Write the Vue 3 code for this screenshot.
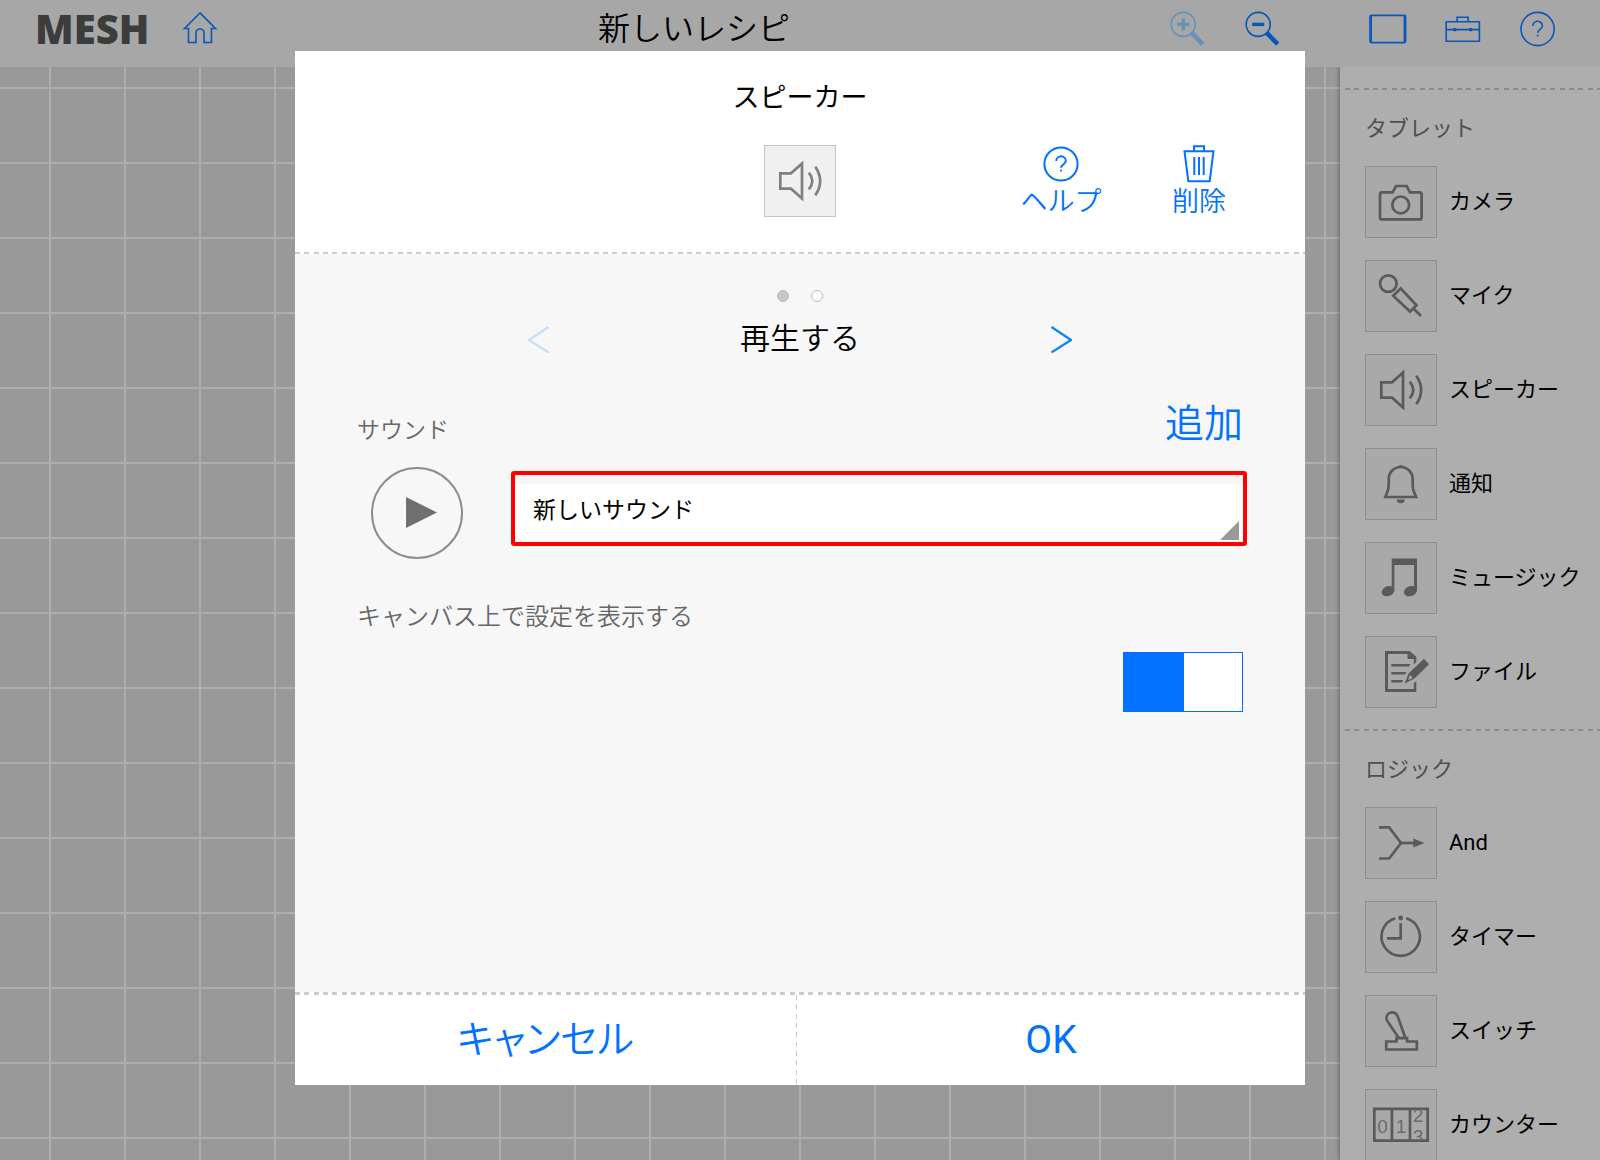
<template>
  <div class="app">
    <header class="topbar">
      <h1 class="logo">MESH</h1>
      <button class="tool home" aria-label="ホーム">
        <svg class="tool-icon" viewBox="0 0 40 40">
          <path d="M20 4 4.500 19.500h4v14H16V24a4 4 0 0 1 8 0v9.500h7.500v-14h4z" />
        </svg>
      </button>
      <div class="recipe-name">新しいレシピ</div>
      <div class="tools">
        <button class="tool faded" aria-label="拡大">
          <svg class="tool-icon" viewBox="0 0 40 40">
            <circle cx="15.2" cy="15.4" r="12" />
            <path class="thick" d="M9.2 15.4h12M15.2 9.4v12" />
            <path class="handle" d="m23.5 23.7 11.2 11.4" />
          </svg>
        </button>
        <button class="tool zoom-out" aria-label="縮小">
          <svg class="tool-icon" viewBox="0 0 40 40">
            <circle cx="15.2" cy="15.4" r="12" />
            <path class="thick" d="M9.2 15.4h12" />
            <path class="handle" d="m23.5 23.7 11.2 11.4" />
          </svg>
        </button>
        <button class="tool" aria-label="タブレット">
          <svg class="tool-icon" viewBox="0 0 40 40">
            <rect x="2" y="6.4" width="35.6" height="27.2" rx="1.5" />
            <path d="M3.2 7v26M36.4 7v26" />
          </svg>
        </button>
        <button class="tool" aria-label="ツール">
          <svg class="tool-icon" viewBox="0 0 40 40">
            <path d="M3.2 12.7h33.2v19.6H3.2zM3.2 20.6h33.2M14.1 12.5V8.2h11v4.3" />
            <path class="thick" d="M10.3 20.6h3M26.1 20.6h3" />
          </svg>
        </button>
        <button class="tool" aria-label="ヘルプ">
          <svg class="tool-icon" viewBox="0 0 40 40">
            <circle cx="19.6" cy="20" r="16.6" />
            <path d="M14.900 17a4.700 4.700 0 0 1 9.500 0c0 3.200-4.700 3.400-4.700 6.800M19.700 25.800v1.800" />
          </svg>
        </button>
      </div>
    </header>

    <div class="workspace">
      <main class="canvas"></main>

      <aside class="sidebar">
        <section v-for="group in groups" :key="group.title">
          <div class="dashes"></div>
          <h2 class="group-title">{{ group.title }}</h2>
          <ul class="tag-list">
            <li v-for="tag in group.tags" :key="tag.name">
              <button class="tag">
                <span class="tag-box">
                  <svg viewBox="0 0 70 70">
                    <path
                      v-for="(d, i) in tag.lines"
                      :key="i"
                      class="line"
                      :d="d"
                    />
                    <path
                      v-for="(d, i) in tag.fills"
                      :key="'f' + i"
                      class="fill"
                      :d="d"
                    />
                    <!-- The counter shows its last wheel halfway between two digits -->
                    <template v-if="tag.digits">
                      <clipPath id="wheel">
                        <rect x="8" y="20.5" width="54" height="28.5" />
                      </clipPath>
                      <g clip-path="url(#wheel)">
                        <text
                          v-for="digit in tag.digits"
                          :key="digit.text"
                          :x="digit.x"
                          :y="digit.y"
                        >
                          {{ digit.text }}
                        </text>
                      </g>
                    </template>
                  </svg>
                </span>
                {{ tag.name }}
              </button>
            </li>
          </ul>
        </section>
      </aside>
    </div>

    <div class="overlay">
      <div class="dialog" role="dialog" aria-labelledby="dialog-title">
        <div class="dialog-head">
          <h2 id="dialog-title" class="dialog-title">スピーカー</h2>
          <div class="dialog-tools">
            <span class="tag-box light">
              <svg viewBox="0 0 70 70">
                <path v-for="(d, i) in speaker" :key="i" class="line" :d="d" />
              </svg>
            </span>
            <button class="action help">
              <svg class="tool-icon" viewBox="0 0 40 40">
                <circle cx="20" cy="20" r="16.6" />
                <path d="M15.3 17a4.7 4.7 0 0 1 9.5 0c0 3.2-4.7 3.4-4.7 6.8M20.1 25.8v1.8" />
              </svg>
              ヘルプ
            </button>
            <button class="action delete">
              <svg class="tool-icon" viewBox="0 0 40 40">
                <path d="M5.5 7.2h29l-3.8 30H9.3zM15 7V2.2h10V7" />
                <path d="M15.3 13v18M20 13v18M24.7 13v18" />
              </svg>
              削除
            </button>
          </div>
        </div>
        <div class="dashes"></div>

        <div class="dialog-body">
          <div class="dots">
            <span
              v-for="n in pages.length"
              :key="n"
              class="dot"
              :class="{ active: page === n - 1 }"
            ></span>
          </div>
          <div class="pager">
            <button
              class="arrow"
              aria-label="前へ"
              :disabled="page === 0"
              @click="page--"
            >
              <svg viewBox="0 0 22 28"><path d="M20.500 2 1 15l19.500 12.500" /></svg>
            </button>
            <span class="page-name">{{ pages[page] }}</span>
            <button
              class="arrow"
              aria-label="次へ"
              :disabled="page === pages.length - 1"
              @click="page++"
            >
              <svg viewBox="0 0 22 28"><path d="M1.500 2 21 15 1.500 27.500" /></svg>
            </button>
          </div>

          <div class="sound-head">
            <label class="label" for="sound">サウンド</label>
            <button class="add">追加</button>
          </div>
          <div class="sound-row">
            <button class="play" aria-label="再生">
              <svg viewBox="0 0 92 92">
                <circle cx="46" cy="46" r="45" />
                <path d="M35 30v31l31-15.500z" />
              </svg>
            </button>
            <div class="select-wrap">
              <select id="sound" v-model="sound">
                <option>新しいサウンド</option>
              </select>
            </div>
          </div>

          <div class="show-setting">
            <label class="label" for="show">キャンバス上で設定を表示する</label>
            <input id="show" v-model="showOnCanvas" class="switch" type="checkbox" />
          </div>
        </div>

        <div class="dashes bold"></div>
        <div class="dialog-foot">
          <button class="cancel">キャンセル</button>
          <div class="divider"></div>
          <button class="ok">OK</button>
        </div>
      </div>
    </div>
  </div>
</template>

<script setup>
import { ref } from "vue";

const pages = ["再生する", "停止する"];
const page = ref(0);
const sound = ref("新しいサウンド");
const showOnCanvas = ref(true);

// Used both in the sidebar and at the top of the dialog.
const speaker = [
  "M15.300 27.300H26L37 17.600V52.400L26 42.700H15.300z",
  "M43.800 26.700Q50.800 35 43.800 43.300",
  "M50.300 20.700Q60 35 50.300 49.300",
];

// Icons are drawn on a 70 x 70 grid: lines are stroked, fills are solid.
const groups = [
  {
    title: "タブレット",
    tags: [
      {
        name: "カメラ",
        lines: [
          "M16 25.400H26.600L30 19H40.600L44 25.400H53.600a2 2 0 0 1 2 2V50.400a2 2 0 0 1-2 2H16a2 2 0 0 1-2-2V27.400a2 2 0 0 1 2-2z",
          "M26.300 37.900a8.400 8.400 0 1 0 16.800 0a8.400 8.400 0 1 0-16.800 0z",
        ],
      },
      {
        name: "マイク",
        lines: [
          "M14 22.600a8.300 8.300 0 1 0 16.600 0a8.300 8.300 0 1 0-16.600 0z",
          "M34.700 27.500 50.500 44.200 44 50.600 27.200 34.800z",
          "M47.500 47.500 55 55",
        ],
      },
      { name: "スピーカー", lines: speaker },
      {
        name: "通知",
        lines: [
          "M22.700 36V30a12 12 0 0 1 24 0V37c0 5 1.800 6.500 3.400 11H19.300c1.600-4.500 3.400-6 3.400-12z",
        ],
        fills: [
          "M31.500 18.500a3.300 2.800 0 0 1 6.500 0z",
          "M30.600 50.500h8.200a4.100 3.800 0 0 1-8.200 0z",
        ],
      },
      {
        name: "ミュージック",
        fills: [
          "M25.700 15.600H51V48H48V22H28.400V48H25.700z",
          "M15.800 49.400c0-4 4-6.500 7.500-6.500 3 0 5 1.500 5 4.200 0 3.500-3.500 6.200-7.200 6.200-3 0-5.300-1.500-5.300-3.900z",
          "M38 49.400c0-4 4-6.500 7.500-6.500 3 0 5.400 1.500 5.400 4.200 0 3.500-3.600 6.200-7.300 6.200-3 0-5.600-1.500-5.600-3.900z",
        ],
      },
      {
        name: "ファイル",
        fills: [
          "M19 14H43.500L50.300 19.800V25L47.800 27.500V22H41.500V17H22V52H47.800V46.500L50.300 44V55H19z",
          "M25.300 27H44.500L43 29.500H25.300zM25.300 35H40.500L39 37.500H25.300zM25.300 43H37L36 45.500H25.300z",
          "M58 21.800 63 27.200 48.500 41.500 38.700 46.500 42.500 36.500zM44 38 42 43.300 46.800 40.800z",
        ],
      },
    ],
  },
  {
    title: "ロジック",
    tags: [
      {
        name: "And",
        lines: [
          "M13 19.400H23.200L35 35 23.200 50.500H13",
          "M35 35H48",
        ],
        fills: ["M47.300 30.500 58.500 35 47.300 39.500z"],
      },
      {
        name: "タイマー",
        lines: [
          "M40.200 16.200A19.200 19.200 0 1 1 29.200 16.200",
          "M34.700 21.300V36.300H21",
        ],
        fills: ["M32.300 16a2.400 2.400 0 1 0 4.800 0a2.400 2.400 0 1 0-4.800 0z"],
      },
      {
        name: "スイッチ",
        lines: [
          "M32.500 41.500 21 24.500A5.700 5.700 0 1 1 31.400 19.600L39.200 41.500",
          "M20.200 45.500H30.500V42.200H41V45.500H50.800V53.500H20.200z",
        ],
      },
      {
        name: "カウンター",
        lines: ["M8.300 18.800H61.700V50.600H8.300zM25.900 19V50M44 19V50"],
        digits: [
          { text: "0", x: 16.5, y: 43 },
          { text: "1", x: 35, y: 43 },
          { text: "2", x: 52, y: 31.5 },
          { text: "3", x: 52, y: 52.5 },
        ],
      },
    ],
  },
];
</script>

<style>
body {
  margin: 0;
}
</style>

<style scoped>
.app {
  position: relative;
  display: flex;
  flex-direction: column;
  height: 100vh;
  overflow: hidden;
  background: #999;
  color: #000;
  font-family: Roboto, "Noto Sans CJK JP", sans-serif;
  font-size: 23px;
  font-weight: 400;
}

button {
  padding: 0;
  border: 0;
  background: none;
  color: inherit;
  font: inherit;
  cursor: pointer;
}

h1,
h2,
ul {
  margin: 0;
  padding: 0;
  font-weight: inherit;
  list-style: none;
}

svg {
  display: block;
}

.topbar {
  display: flex;
  align-items: center;
  height: 58px;
  padding: 0 25px 9px 35px;
  background: #a7a7a7;
}

.logo {
  flex: 0 0 127px;
  color: #3c3c3c;
  font-family: "Open Sans", sans-serif;
  font-size: 40px;
  font-weight: 800;
  line-height: 56px;
}

.recipe-name {
  flex: 1;
  font-size: 32px;
  font-weight: 350;
  line-height: 56px;
  text-align: center;
}

.tools {
  display: flex;
}

.tool {
  display: flex;
  justify-content: center;
  width: 75px;
  color: #0a55b8;
}

.home {
  width: 76px;
}

.faded {
  color: #6890b8;
}

.zoom-out {
  margin-right: 50px;
  color: #0558b8;
}

.tool-icon {
  width: 40px;
  height: 40px;
  fill: none;
  stroke: currentColor;
  stroke-width: 1.6;
}

.thick {
  stroke-width: 3.4;
}

.handle {
  stroke-width: 4.6;
}

.workspace {
  display: flex;
  flex: 1;
  min-height: 0;
}

.canvas {
  flex: 1;
  background-image:
    linear-gradient(90deg, #aeaeae 2px, transparent 2px),
    linear-gradient(#aeaeae 2px, transparent 2px);
  background-position: 49px 20px;
  background-size: 75px 75px;
}

.sidebar {
  flex: 0 0 255px;
  padding: 21px 0 0 5px;
  background: #aeaeae;
  box-shadow: -1px 0 4px rgba(0, 0, 0, 0.35);
  clip-path: inset(0 0 0 -10px);
}

.dashes {
  height: 2px;
  background: repeating-linear-gradient(
    90deg,
    #ccc 0 5px,
    transparent 5px 9px,
    #ccc 9px 14px,
    transparent 14px 19px,
    #ccc 19px 24px,
    transparent 24px 28px
  );
}

.sidebar .dashes {
  filter: brightness(0.68);
}

.group-title {
  height: 76px;
  padding-left: 20px;
  color: #505050;
  font-size: 22px;
  line-height: 78px;
}

.tag-list {
  display: flex;
  flex-direction: column;
  gap: 22px;
  padding: 0 0 21px 20px;
}

.tag {
  display: flex;
  align-items: center;
  gap: 12px;
  font-size: 22px;
  line-height: 32px;
  white-space: nowrap;
}

.tag-box {
  flex: none;
  box-sizing: border-box;
  width: 72px;
  height: 72px;
  border: 1px solid #8e8e8e;
  background: #a9a9a9;
  color: #5a5a5a;
}

.tag-box.light {
  border-color: #c4c4c4;
  background: #f0f0f0;
  color: #808080;
}

.line {
  fill: none;
  stroke: currentColor;
  stroke-width: 2.7;
}

.fill {
  fill: currentColor;
  fill-rule: evenodd;
}

.tag-box text {
  fill: #6c6c6c;
  font-family: "Liberation Sans", sans-serif;
  font-size: 19px;
  text-anchor: middle;
}

.overlay {
  position: absolute;
  inset: 0;
  display: flex;
  justify-content: center;
  padding: 51px 0 75px;
}

.dialog {
  display: flex;
  flex-direction: column;
  width: 1010px;
  max-width: 100%;
  background: #fff;
}

.dialog-head {
  height: 201px;
}

.dialog-title {
  padding-top: 29px;
  font-size: 27px;
  line-height: 36px;
  text-align: center;
}

.dialog-tools {
  display: grid;
  grid-template-columns: 1fr 72px 1fr;
  align-items: start;
  margin-top: 29px;
}

.dialog-tools .tag-box {
  grid-column: 2;
}

.action {
  display: flex;
  flex-direction: column;
  align-items: center;
  grid-row: 1;
  grid-column: 3;
  width: 90px;
  margin-top: -1px;
  color: #0072ff;
  font-size: 27px;
  font-weight: 350;
  line-height: 36px;
}

.action .tool-icon {
  stroke-width: 2;
}

.help {
  margin-left: 180px;
}

.delete {
  margin-left: 318px;
}

.dialog-body {
  flex: 1;
  padding: 36px 62px 0;
  background: #f7f7f7;
}

.dots {
  display: flex;
  justify-content: center;
  gap: 22px;
}

.dot {
  box-sizing: border-box;
  width: 12px;
  height: 12px;
  border: 1px solid #bbb;
  border-radius: 50%;
  background: #fff;
}

.dot.active {
  background: #c8c8c8;
}

.pager {
  display: flex;
  align-items: center;
  justify-content: space-between;
  width: 544px;
  margin: 17px auto 0;
}

.page-name {
  font-size: 30px;
  font-weight: 350;
  line-height: 40px;
}

.arrow {
  color: #0a84ff;
}

.arrow:disabled {
  color: #c2dffb;
}

.arrow svg {
  width: 22px;
  height: 28px;
  fill: none;
  stroke: currentColor;
  stroke-width: 2.2;
}

.sound-head {
  display: flex;
  align-items: flex-end;
  justify-content: space-between;
  margin-top: 40px;
}

.label {
  color: #666;
  font-weight: 350;
  line-height: 36px;
}

.add {
  color: #0072ff;
  font-size: 39px;
  font-weight: 350;
  line-height: 50px;
}

.sound-row {
  display: flex;
  align-items: flex-start;
  gap: 52px;
  margin-top: 18px;
  padding-left: 14px;
}

.play svg {
  width: 92px;
  height: 92px;
}

.play circle {
  fill: none;
  stroke: #8e8e8e;
  stroke-width: 2;
}

.play path {
  fill: #707070;
}

.select-wrap {
  position: relative;
  flex: 1;
  margin-top: 8px;
}

/* Small grey corner that marks the field as a drop-down. */
.select-wrap::after {
  content: "";
  position: absolute;
  right: 4px;
  bottom: 2px;
  width: 19px;
  height: 19px;
  background: #999;
  clip-path: polygon(100% 0, 100% 100%, 0 100%);
  pointer-events: none;
}

select {
  display: block;
  box-sizing: border-box;
  width: 100%;
  height: 67px;
  padding: 4px 18px 0;
  border: 0;
  border-radius: 1px;
  appearance: none;
  background: linear-gradient(#f7f7f7 9px, #fff 9px);
  box-shadow: 0 0 0 4px #f00;
  color: #000;
  font: inherit;
}

.show-setting {
  display: flex;
  flex-direction: column;
  gap: 17px;
  margin-top: 40px;
}

.show-setting .label {
  font-size: 24px;
}

.switch {
  box-sizing: border-box;
  align-self: flex-end;
  width: 120px;
  height: 60px;
  margin: 0;
  border: 1px solid #0072ff;
  appearance: none;
  background: linear-gradient(90deg, #fff 50%, #bbb 50%);
}

.switch:checked {
  background: linear-gradient(90deg, #0072ff 60px, #fff 60px);
}

.dashes.bold {
  height: 3px;
}

.dialog-foot {
  display: flex;
  height: 90px;
  color: #0072ff;
  font-size: 39px;
  line-height: 90px;
}

.cancel {
  flex: 0 1 501px;
  font-feature-settings: "palt";
  font-weight: 350;
}

.ok {
  flex: 1;
}

.divider {
  width: 1px;
  background: repeating-linear-gradient(
    #ccc 0 5px,
    transparent 5px 9px,
    #ccc 9px 14px,
    transparent 14px 19px,
    #ccc 19px 24px,
    transparent 24px 28px
  );
}
</style>
